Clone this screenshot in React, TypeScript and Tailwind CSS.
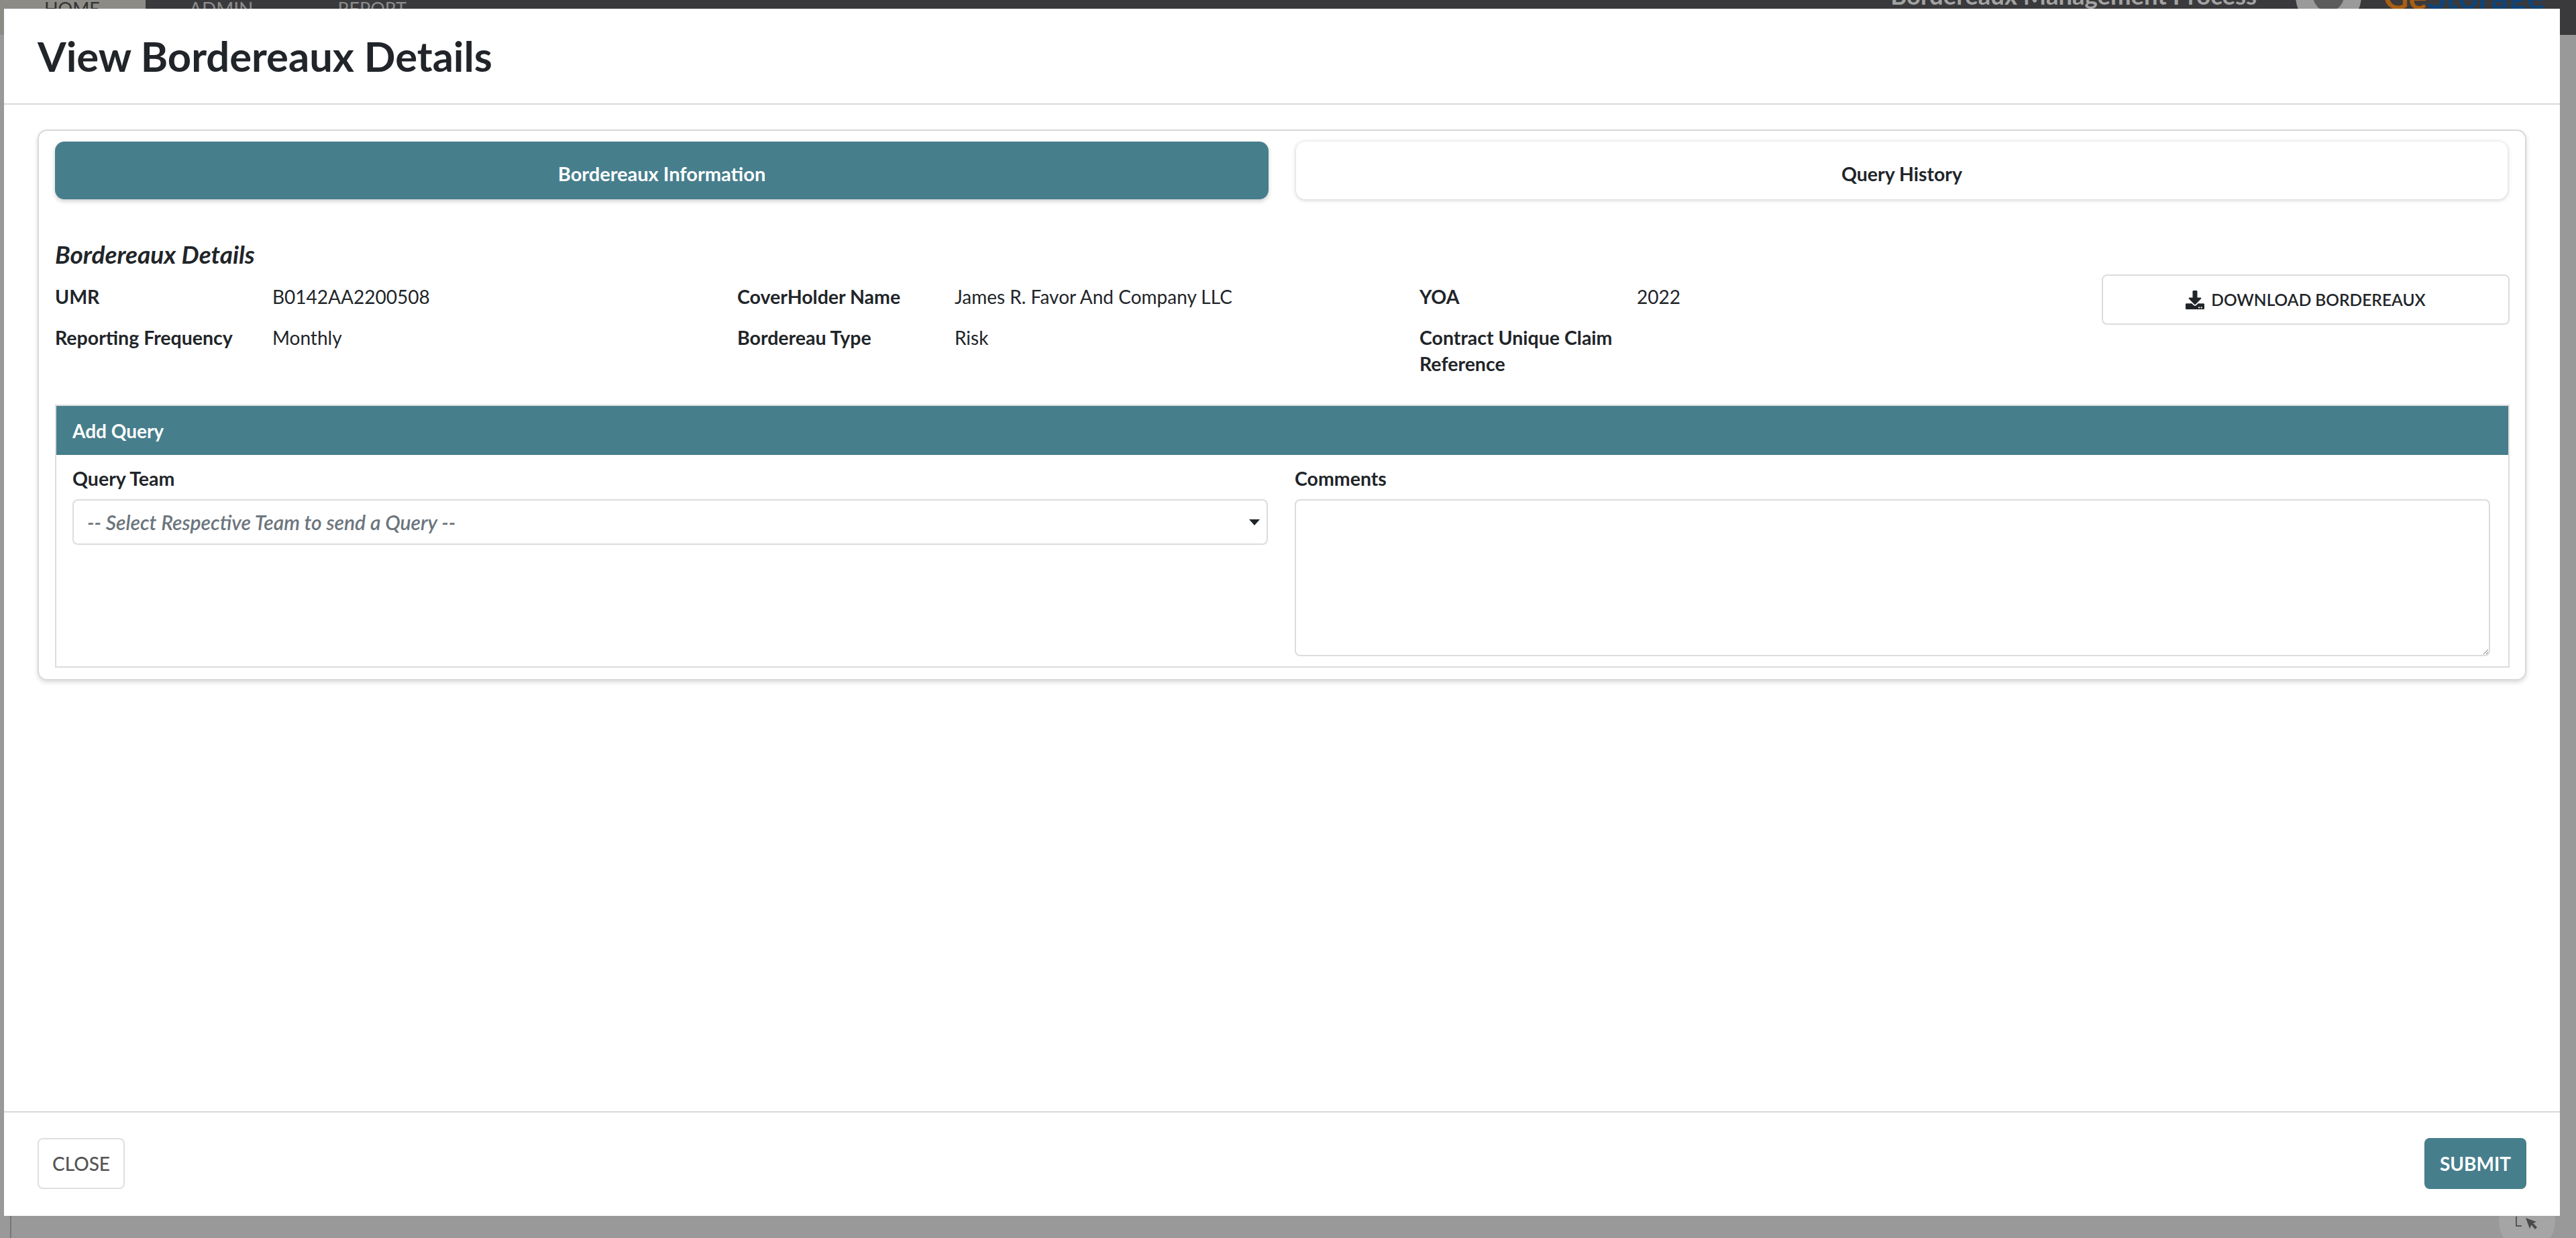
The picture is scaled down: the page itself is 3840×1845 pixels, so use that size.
import { FaDownload } from "react-icons/fa";

const teal = "bg-[#467e8c]";

function Detail({ label, value }: { label: string; value?: string }) {
  return (
    <div className="flex w-[1017px] text-[28px] leading-[39px] text-[#212529]">
      <div className="w-[324px] pr-6 text-[28.5px] font-bold">{label}</div>
      <div>{value}</div>
    </div>
  );
}

export default function App() {
  return (
    <div className="relative h-screen overflow-hidden bg-[#999999] font-['Lato','Liberation_Sans',sans-serif]">
      {/* page behind the modal */}
      <div className="flex h-[52px] items-start overflow-hidden bg-[#3a3a3c]">
        <div className="h-[52px] w-[217px] bg-[#8d8b86] pl-[66px] text-[27px] leading-[26px] text-[#333]">HOME</div>
        <div className="ml-[65px] text-[28px] leading-[26px] text-[#8c8c8c]">ADMIN</div>
        <div className="ml-[126px] text-[27px] leading-[26px] text-[#8c8c8c]">REPORT</div>
        <div className="ml-auto mr-[476px] mt-[-31px] text-[36.5px] font-bold leading-[48px] text-[#a3a3a3]">
          Bordereaux Management Process
        </div>
      </div>
      <div className="absolute left-[3422px] top-[-55px] h-[98px] w-[98px] rounded-full border-[26px] border-[#9a9a9a] bg-[#5c5c5c]" />
      <div className="absolute left-[3553px] top-[-32px] text-[52px] font-bold leading-[52px] text-[#a85f12]">
        Ge<span className="text-[#0f4478]">Storage</span>
      </div>
      <div className="absolute bottom-0 left-[15px] h-[34px] w-[2px] bg-[#777]" />
      <div className="absolute left-[3725px] top-[1779px] h-[84px] w-[84px] rounded-full bg-[#a5a5a5]" />
      <div className="absolute left-[3750px] top-[1813px] h-[15px] w-[9px] border-b-2 border-l-2 border-[#555]" />
      <svg className="absolute left-[3764px] top-[1814px] h-[19px] w-[19px]" viewBox="0 0 19 19">
        <path d="M1 1 L7 17 L9.5 11.5 L15 18 L18 15 L12 9 L17 7 Z" fill="#4a4a4a" />
      </svg>

      {/* modal */}
      <div className="absolute left-[6px] top-[13px] flex h-[1799px] w-[3810px] flex-col bg-white text-[#212529]">
        <div className="flex h-[143px] items-center border-b-2 border-[#d9d9d9] pl-[50px]">
          <h1 className="text-[61.5px] font-bold leading-none text-[#212529]">View Bordereaux Details</h1>
        </div>

        <div className="flex-1 px-[50px] pt-[37px]">
          <div className="h-[821px] rounded-[14px] border-2 border-[#d9d9d9] pl-[24px] pr-[23px] pt-[16px] shadow-[0_3px_6px_rgba(0,0,0,0.15)]">
            <div className="flex gap-[41px]">
              <div className={`flex h-[86px] w-[1809px] items-center justify-center rounded-[14px] pt-[10px] ${teal} text-[29px] font-bold text-white shadow-[0_3px_6px_rgba(0,0,0,0.2)]`}>
                Bordereaux Information
              </div>
              <div className="flex h-[86px] w-[1806px] items-center justify-center rounded-[14px] bg-white pt-[10px] text-[28.5px] font-bold text-[#212529] shadow-[0_1px_6px_rgba(0,0,0,0.22)]">
                Query History
              </div>
            </div>

            <h2 className="mt-[60px] text-[37px] font-bold italic leading-[44px]">Bordereaux Details</h2>

            <div className="relative mt-[22px] flex h-[180px] flex-col gap-[22px]">
              <div className="flex">
                <Detail label="UMR" value="B0142AA2200508" />
                <Detail label="CoverHolder Name" value="James R. Favor And Company LLC" />
                <Detail label="YOA" value="2022" />
              </div>
              <div className="flex">
                <Detail label="Reporting Frequency" value="Monthly" />
                <Detail label="Bordereau Type" value="Risk" />
                <Detail label="Contract Unique Claim Reference" />
              </div>
              <button className="absolute right-0 top-[-14px] flex h-[75px] w-[608px] items-center justify-center gap-[10px] rounded-[8px] border-2 border-[#dcdcdc] bg-white pt-[2px] text-[24.5px] font-semibold text-[#212529]">
                <FaDownload size={28} className="mt-[-2px]" />
                DOWNLOAD BORDEREAUX
              </button>
            </div>

            <div className="h-[392px] border-2 border-[#dcdcdc]">
              <div className={`flex h-[73px] items-center pl-[24px] ${teal} text-[28px] font-bold text-white`}>Add Query</div>
              <div className="flex gap-[40px] px-[24px] pt-[16px]">
                <div className="w-[1782px]">
                  <div className="text-[28.5px] font-bold leading-[38px]">Query Team</div>
                  <div className="relative mt-[12px] flex h-[68px] items-center rounded-[8px] border-2 border-[#dcdcdc] pl-[20px] text-[30px] font-semibold italic text-[#6c757d]">
                    -- Select Respective Team to send a Query --
                    <span className="absolute right-[10px] top-[28px] h-0 w-0 border-x-[8px] border-t-[9px] border-x-transparent border-t-[#212529]" />
                  </div>
                </div>
                <div className="w-[1782px]">
                  <div className="text-[28.5px] font-bold leading-[38px]">Comments</div>
                  <textarea className="mt-[12px] block h-[234px] w-full rounded-[8px] border-2 border-[#dcdcdc]" />
                </div>
              </div>
            </div>
          </div>
        </div>

        <div className="flex h-[156px] items-start justify-between border-t-2 border-[#d9d9d9] px-[50px] pt-[38px]">
          <button className="flex h-[76px] w-[130px] items-center justify-center rounded-[8px] border-2 border-[#dfdfdf] bg-white text-[28px] font-medium text-[#555]">
            CLOSE
          </button>
          <button className={`flex h-[76px] w-[152px] items-center justify-center rounded-[8px] ${teal} text-[28px] font-bold text-white`}>
            SUBMIT
          </button>
        </div>
      </div>
    </div>
  );
}
